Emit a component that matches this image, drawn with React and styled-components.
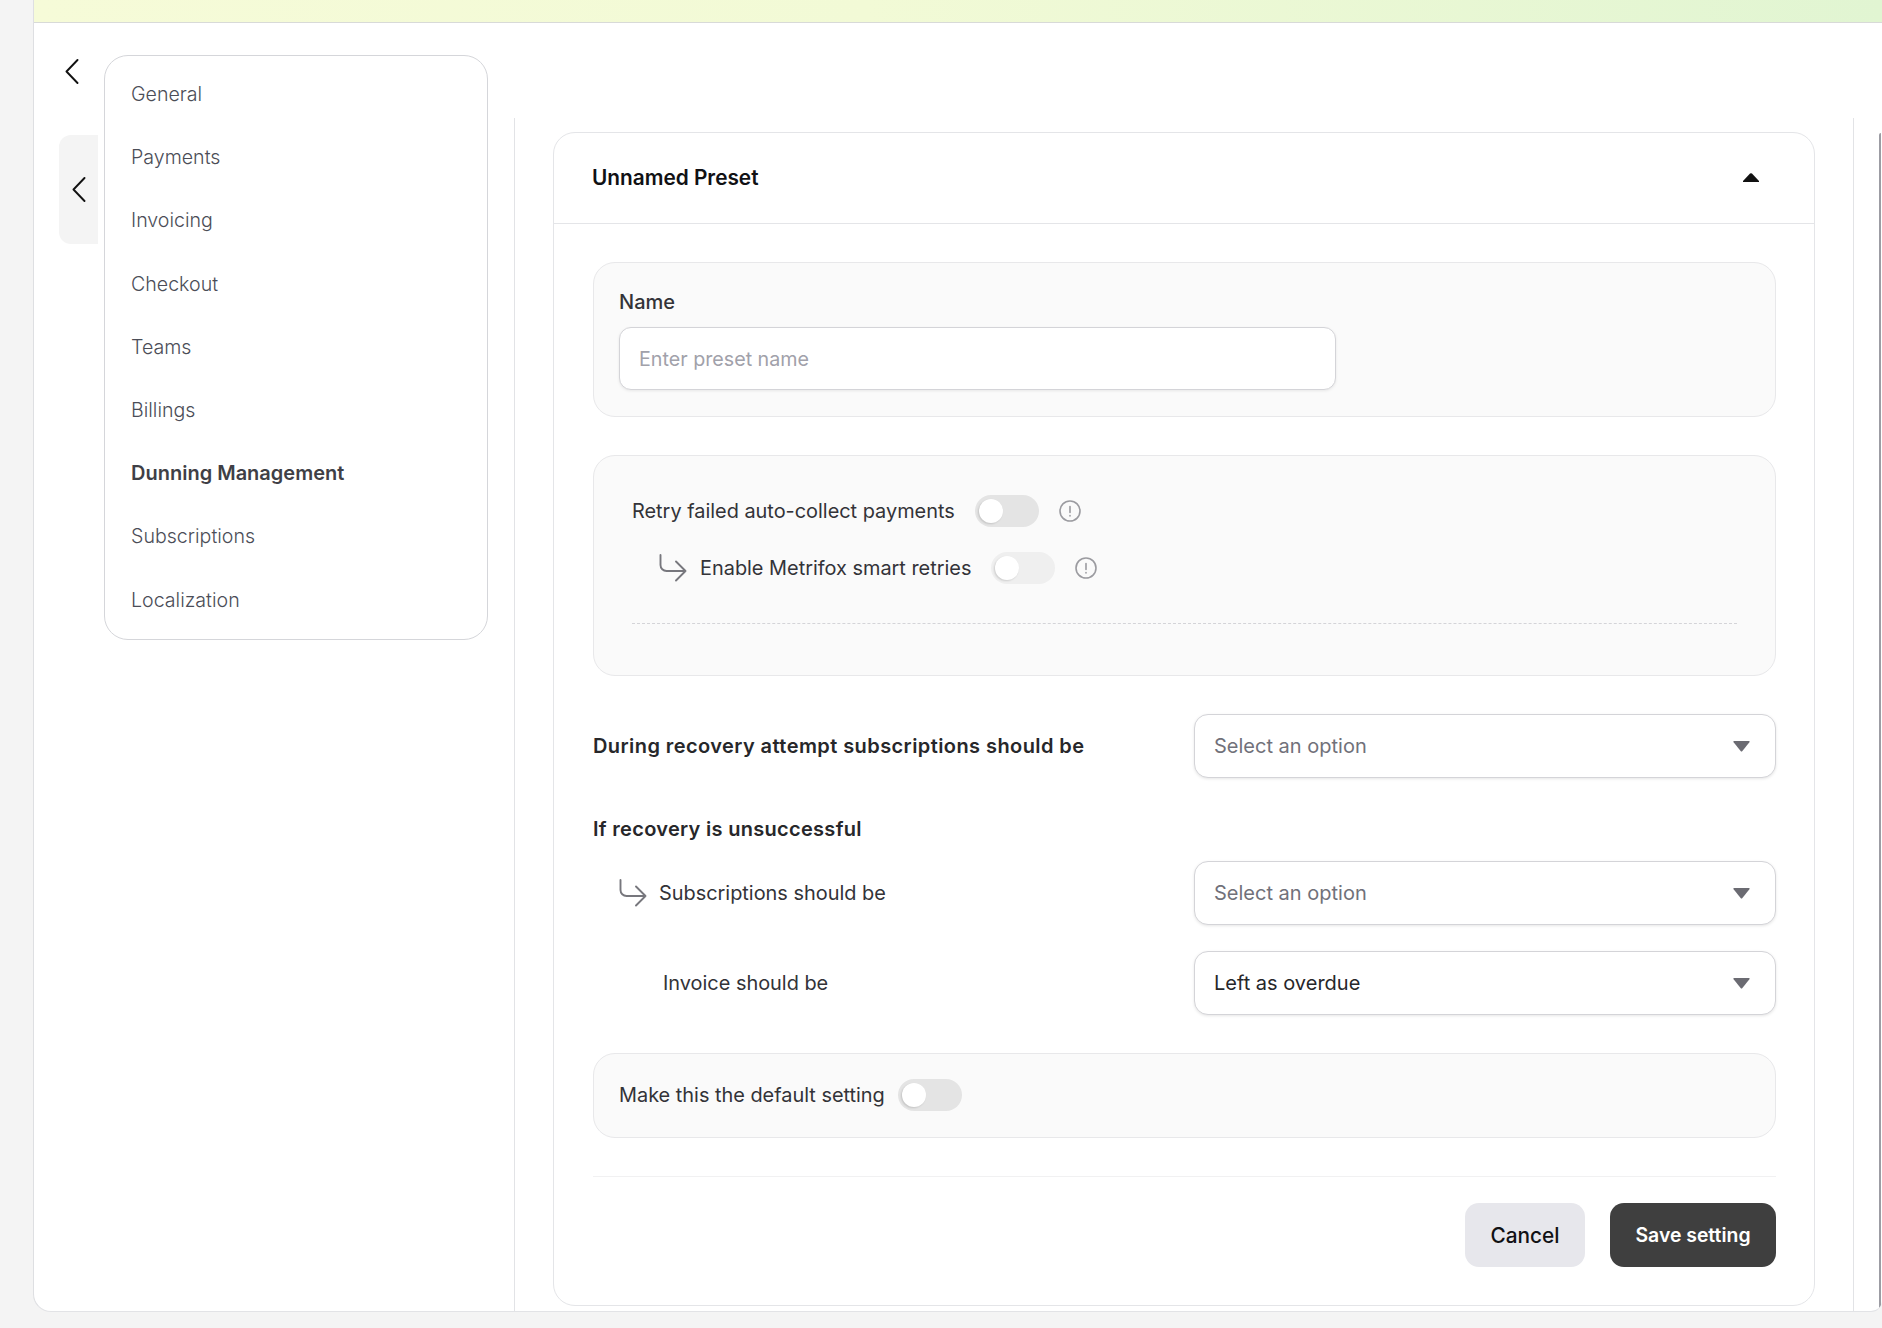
import React from "react";
import styled, { createGlobalStyle } from "styled-components";

const Global = createGlobalStyle`
  html, body { margin: 0; padding: 0; background: #f4f4f4; height: 1328px; overflow: hidden; }
  * { box-sizing: border-box; }
  body { font-family: "Inter", "Noto Sans", sans-serif; color: #2b2b2f; }
`;

const Shell = styled.div`
  margin-left: 33px;
  height: 1312px;
  background: #fff;
  border-left: 1px solid #dedfe2;
  border-bottom: 1px solid #e2e3e6;
  border-radius: 0 0 11px 18px;
  display: flex;
  flex-direction: column;
  overflow: hidden;
`;
const Band = styled.div`
  flex: 0 0 23px;
  background: linear-gradient(90deg, #f6fbd8 0%, #f2fad6 45%, #e1f5d2 100%);
  border-bottom: 1px solid #d8dad8;
`;
const Main = styled.div`
  flex: 1;
  display: flex;
  min-height: 0;
`;
const Rail = styled.div`
  flex: 0 0 70px;
  padding-left: 25px;
  display: flex;
  flex-direction: column;
`;
const BackLink = styled.div`
  margin: 36px 0 0 6px;
  height: 24px;
  display: flex;
`;
const CollapseTab = styled.div`
  margin-top: 52px;
  width: 39px;
  height: 109px;
  background: #f4f4f4;
  border-radius: 12px 0 0 12px;
  padding-left: 13px;
  display: flex;
  align-items: center;
`;
const SideColumn = styled.div`
  flex: 0 0 410px;
  padding-top: 32px;
`;
const Nav = styled.nav`
  width: 384px;
  height: 585px;
  border: 1px solid #d5d6da;
  border-radius: 24px;
  padding: 6.5px 26px 0;
  display: flex;
  flex-direction: column;
`;
const NavItem = styled.div`
  height: 63.2px;
  display: flex;
  align-items: center;
  font-size: ${(p) => (p.$active ? 20 : 19.6)}px;
  font-weight: ${(p) => (p.$active ? 600 : 300)};
  color: ${(p) => (p.$active ? "#3f3f46" : "#4b4d57")};
`;
const Content = styled.div`
  flex: 0 0 1340px;
  margin-top: 95px;
  padding: 14px 38px 5px 38px;
  border-left: 1px solid #e2e3e6;
  border-right: 1px solid #e2e3e6;
  display: flex;
`;
const ScrollEdge = styled.div`
  flex: 0 0 2px;
  margin: 110px 0 0 25px;
  background: #9c9ca3;
  border-radius: 2px 0 0 0;
`;
const Card = styled.section`
  flex: 1;
  border: 1px solid #e4e5e8;
  border-radius: 22px;
  display: flex;
  flex-direction: column;
`;
const CardHeader = styled.header`
  flex: 0 0 91px;
  padding: 0 55px 2px 38px;
  display: flex;
  align-items: center;
  justify-content: space-between;
  border-bottom: 1px solid #e4e5e8;
`;
const CardTitle = styled.h2`
  margin: 0;
  font-size: 20.8px;
  font-weight: 600;
  color: #111114;
`;
const CardBody = styled.div`
  padding: 38px 38px 38px 39px;
  display: flex;
  flex-direction: column;
  gap: 38px;
`;
const Panel = styled.div`
  background: #fafafa;
  border: 1px solid #e8e8ea;
  border-radius: 22px;
  padding: ${(p) => p.$pad};
  height: ${(p) => p.$height}px;
  display: flex;
  flex-direction: column;
`;
const FieldLabel = styled.label`
  font-size: 20px;
  font-weight: 500;
  line-height: 28px;
  color: #333338;
  margin-bottom: 11px;
`;
const TextInput = styled.input`
  width: 717px;
  height: 63px;
  border: 1px solid #d4d4d8;
  border-radius: 12px;
  background: #fff;
  box-shadow: 0 1px 3px rgba(0, 0, 0, 0.08);
  padding: 0 19px;
  font: 400 19.7px "Inter", sans-serif;
  outline: none;
  &::placeholder { color: #a1a1aa; opacity: 1; }
`;
const ToggleRow = styled.div`
  display: flex;
  align-items: center;
  height: 32px;
  margin-left: ${(p) => p.$indent || 0}px;
  margin-top: ${(p) => p.$top || 0}px;
`;
const RowText = styled.span`
  font-size: 19.9px;
  line-height: 26px;
  color: #333338;
  white-space: nowrap;
`;
const Switch = styled.span`
  width: 64px;
  height: 32px;
  margin-left: ${(p) => p.$gap || 20}px;
  border-radius: 16px;
  background: ${(p) => (p.$disabled ? "#efefef" : "#e4e4e4")};
  padding: 4px;
  display: inline-flex;
  flex: none;
  &::before {
    content: "";
    width: 24px;
    height: 24px;
    border-radius: 50%;
    background: #fff;
    box-shadow: -1px 1px 2px rgba(0, 0, 0, 0.14);
  }
`;
const InfoIcon = styled.svg`
  width: 22px;
  height: 22px;
  margin-left: 20px;
  flex: none;
`;
const BranchIcon = styled.svg`
  width: 28px;
  height: 28px;
  flex: none;
  margin-right: ${(p) => p.$gap}px;
`;
const Dashed = styled.div`
  margin-top: 39px;
  border-top: 1px dashed #d4d4d8;
`;
const FormRow = styled.div`
  display: flex;
  align-items: center;
  justify-content: space-between;
  padding-left: ${(p) => p.$indent || 0}px;
`;
const RowLead = styled.div`
  display: flex;
  align-items: center;
`;
const StrongLabel = styled.div`
  font-size: 20px;
  font-weight: 600;
  letter-spacing: 0.42px;
  line-height: 26px;
  color: #27272a;
`;
const Group = styled.div`
  display: flex;
  flex-direction: column;
  gap: 26px;
`;
const GroupTitle = styled(StrongLabel)`
  margin-bottom: -7px;
  letter-spacing: 0.3px;
`;
const Select = styled.div`
  width: 582px;
  height: 64px;
  border: 1px solid #d4d4d8;
  border-radius: 14px;
  background: #fff;
  box-shadow: 0 1px 3px rgba(0, 0, 0, 0.1);
  padding: 0 25px 0 19px;
  display: flex;
  align-items: center;
  justify-content: space-between;
  font-size: 20px;
  color: ${(p) => (p.$placeholder ? "#71717a" : "#27272a")};
`;
const Footer = styled.div`
  border-top: 1px solid #f1f1f2;
  padding-top: 26px;
  display: flex;
  justify-content: flex-end;
  gap: 25px;
`;
const Button = styled.button`
  height: 64px;
  width: ${(p) => p.$width}px;
  border: none;
  border-radius: 14px;
  background: ${(p) => (p.$primary ? "#3f3f3f" : "#e7e7ec")};
  color: ${(p) => (p.$primary ? "#fff" : "#111114")};
  font: ${(p) => (p.$primary ? 600 : 500)} ${(p) => (p.$primary ? 19.4 : 20.8)}px "Inter", sans-serif;
`;

const Chevron = () => (
  <svg width="14" height="25" viewBox="0 0 14 25" fill="none" stroke="#111" strokeWidth="1.9" strokeLinecap="round" strokeLinejoin="round">
    <path d="M12.5 1 L1.5 12.5 L12.5 24" />
  </svg>
);
const Info = () => (
  <InfoIcon viewBox="0 0 22 22" fill="none" stroke="#9b9ba0" strokeWidth="1.6" strokeLinecap="round">
    <circle cx="11" cy="11" r="10" />
    <path d="M11 6.5v6M11 15.5v.4" />
  </InfoIcon>
);
const Branch = ({ gap }) => (
  <BranchIcon $gap={gap} viewBox="0 0 28 28" fill="none" stroke="#77777d" strokeWidth="1.9" strokeLinecap="round" strokeLinejoin="round">
    <path d="M1.5 1V11a6 6 0 0 0 6 6H26.5M17 7.5 L26.5 17 L17 26.5" />
  </BranchIcon>
);
const CaretUp = () => (
  <svg width="16" height="9" viewBox="0 0 16 9" style={{ flex: "none" }}>
    <path d="M7 .6 Q8 -.2 9 .6 L16 8 V9 H0 V8 Z" fill="#111" />
  </svg>
);
const CaretDown = () => (
  <svg width="17" height="11" viewBox="0 0 17 11" style={{ flex: "none" }}>
    <path d="M1 0 H16 Q17.2 0 16.4 1.2 L9.4 10 Q8.5 11 7.6 10 L0.6 1.2 Q-0.2 0 1 0 Z" fill="#6b6b72" />
  </svg>
);

const items = ["General", "Payments", "Invoicing", "Checkout", "Teams", "Billings", "Dunning Management", "Subscriptions", "Localization"];

export default function App() {
  return (
    <>
      <Global />
      <Shell>
        <Band />
        <Main>
          <Rail>
            <BackLink><Chevron /></BackLink>
            <CollapseTab><Chevron /></CollapseTab>
          </Rail>
          <SideColumn>
            <Nav>
              {items.map((t) => (
                <NavItem key={t} $active={t === "Dunning Management"}>{t}</NavItem>
              ))}
            </Nav>
          </SideColumn>
          <Content>
            <Card>
              <CardHeader>
                <CardTitle>Unnamed Preset</CardTitle>
                <CaretUp />
              </CardHeader>
              <CardBody>
                <Panel $pad="25px 25px" $height={155}>
                  <FieldLabel>Name</FieldLabel>
                  <TextInput placeholder="Enter preset name" />
                </Panel>
                <Panel $pad="39px 38px" $height={221}>
                  <ToggleRow>
                    <RowText>Retry failed auto-collect payments</RowText>
                    <Switch />
                    <Info />
                  </ToggleRow>
                  <ToggleRow $indent={27} $top={25}>
                    <Branch gap={13} />
                    <RowText>Enable Metrifox smart retries</RowText>
                    <Switch $disabled />
                    <Info />
                  </ToggleRow>
                  <Dashed />
                </Panel>
                <FormRow>
                  <StrongLabel>During recovery attempt subscriptions should be</StrongLabel>
                  <Select $placeholder>Select an option<CaretDown /></Select>
                </FormRow>
                <Group>
                  <GroupTitle>If recovery is unsuccessful</GroupTitle>
                  <FormRow $indent={26}>
                    <RowLead>
                      <Branch gap={12} />
                      <RowText>Subscriptions should be</RowText>
                    </RowLead>
                    <Select $placeholder>Select an option<CaretDown /></Select>
                  </FormRow>
                  <FormRow $indent={70}>
                    <RowText>Invoice should be</RowText>
                    <Select>Left as overdue<CaretDown /></Select>
                  </FormRow>
                </Group>
                <Panel $pad="25px" $height={85}>
                  <ToggleRow>
                    <RowText>Make this the default setting</RowText>
                    <Switch $gap={13} />
                  </ToggleRow>
                </Panel>
                <Footer>
                  <Button $width={120}>Cancel</Button>
                  <Button $primary $width={166}>Save setting</Button>
                </Footer>
              </CardBody>
            </Card>
          </Content>
          <ScrollEdge />
        </Main>
      </Shell>
    </>
  );
}
